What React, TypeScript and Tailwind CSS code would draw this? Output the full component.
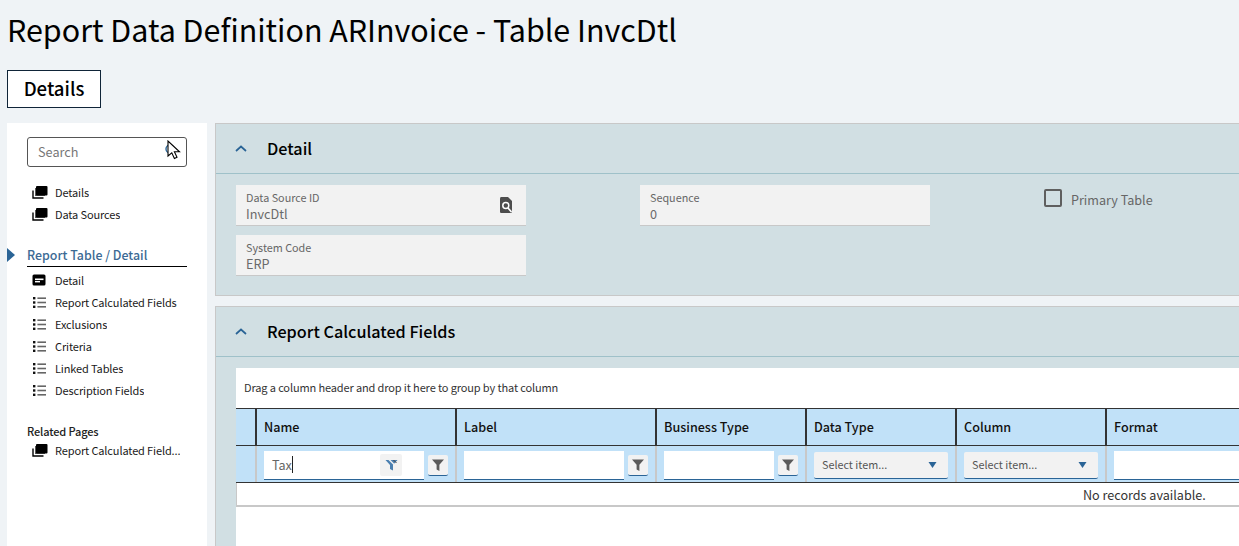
import React from "react";

function StackIcon() {
  return (
    <svg width="16" height="14" viewBox="0 0 16 14" className="shrink-0">
      <path d="M1 5.5V13H11.5" fill="none" stroke="#000" strokeWidth="1.4" />
      <rect x="3" y="3" width="10" height="8" fill="#555" />
      <rect x="4" y="1" width="11.5" height="9.5" rx="1" fill="#000" />
    </svg>
  );
}

function DetailIcon() {
  return (
    <svg width="14" height="12" viewBox="0 0 14 12" className="shrink-0">
      <rect x="0.5" y="0.5" width="13" height="11" rx="1.5" fill="#000" />
      <rect x="3" y="4.5" width="8.5" height="1.6" fill="#fff" />
      <rect x="3" y="7" width="5" height="1.4" fill="#fff" />
    </svg>
  );
}

function ListIcon() {
  return (
    <svg width="13" height="11" viewBox="0 0 13 11" className="shrink-0 ml-px">
      <rect x="0" y="0" width="2.4" height="2.4" fill="#111" />
      <rect x="0" y="4.3" width="2.4" height="2.4" fill="#111" />
      <rect x="0" y="8.6" width="2.4" height="2.4" fill="#111" />
      <rect x="4.4" y="0.4" width="8.6" height="1.6" fill="#666" />
      <rect x="4.4" y="4.7" width="8.6" height="1.6" fill="#666" />
      <rect x="4.4" y="9" width="8.6" height="1.6" fill="#666" />
    </svg>
  );
}

function Funnel() {
  return (
    <svg width="12" height="12" viewBox="0 0 12 12">
      <path d="M0 0.5H12L7.4 5.8V12L4.6 10.4V5.8Z" fill="#5a5a5a" />
    </svg>
  );
}

function FilterBtn() {
  return (
    <button className="w-5 h-[21px] shrink-0 bg-[#f2f2f2] rounded-[2px] border-b border-[#2a6496] flex items-center justify-center">
      <Funnel />
    </button>
  );
}

function Chevron() {
  return (
    <svg width="12" height="7" viewBox="0 0 12 7" className="shrink-0">
      <path d="M1 6L6 1.5L11 6" fill="none" stroke="#2a6496" strokeWidth="1.7" />
    </svg>
  );
}

function NavItem({ icon, label }: { icon: React.ReactNode; label: string }) {
  return (
    <div className="h-[22px] flex items-center text-[11px] tracking-[-0.13px] text-[#1a1a1a]">
      <span className="w-[28px] shrink-0 pl-[5px] flex items-center">{icon}</span>
      <span className="truncate leading-[16px]">{label}</span>
    </div>
  );
}

function Field({ label, value, icon }: { label: string; value: string; icon?: React.ReactNode }) {
  return (
    <div className="relative w-full h-[41px] bg-[#f2f2f2] border-b border-[#c8c8c8] px-[10px] pt-[5px]">
      <div className="text-[10.8px] leading-[15px] text-[#666]">{label}</div>
      <div className="text-[12.7px] leading-[18px] text-[#6a6a6a]">{value}</div>
      {icon}
    </div>
  );
}

function PanelHeader({ title }: { title: string }) {
  return (
    <div className="h-[50px] flex items-center pl-[19px] border-b border-[#9fc1c9]">
      <Chevron />
      <span className="ml-[20px] mb-[2px] text-[16.2px] font-medium leading-[24px] text-black">{title}</span>
    </div>
  );
}

function HeadCell({ w, label }: { w: string; label: string }) {
  return (
    <div className={`${w} shrink-0 border-r-2 border-[#333] pl-[7px] flex items-center text-[12.6px] font-medium text-[#111]`}>
      {label}
    </div>
  );
}

function TextFilter({ w, children }: { w: string; children?: React.ReactNode }) {
  return (
    <div className={`${w} shrink-0 border-r-2 border-[#c8c8c8] pl-[7px] pt-[2px] flex items-center gap-[4px]`}>
      <div className="relative w-[160px] h-[29px] shrink-0 bg-white border-b border-[#2a6496] flex items-center pl-2">
        {children}
      </div>
      <FilterBtn />
    </div>
  );
}

function SelectFilter({ w }: { w: string }) {
  return (
    <div className={`${w} shrink-0 border-r-2 border-[#c8c8c8] pl-[7px] pt-[2px] flex items-center`}>
      <div className="w-[134px] h-[27px] bg-[#f2f2f2] rounded-[2px] border-b border-[#2a6496] flex items-center justify-between pl-2 pr-[11px] text-[10.8px] text-[#555]">
        <span>Select item...</span>
        <svg width="9" height="6" viewBox="0 0 9 6">
          <path d="M0.5 0H8.5L4.5 6Z" fill="#2a6496" />
        </svg>
      </div>
    </div>
  );
}

export default function App() {
  return (
    <div
      className="w-[1239px] h-[546px] overflow-hidden bg-[#eff3f6] text-black"
      style={{ fontFamily: '"Noto Sans CJK SC", "Noto Sans", sans-serif' }}
    >
      <h1 className="h-[70px] pl-[7px] pt-[7px] text-[30.45px] leading-[44px] font-normal whitespace-nowrap">
        Report Data Definition ARInvoice - Table InvcDtl
      </h1>
      <div className="pl-[7px]">
        <div className="w-[94px] h-[38px] bg-white border border-[#0f2438] flex items-center justify-center text-[18.6px] font-medium leading-[24px] pb-[2px]">
          Details
        </div>
      </div>
      <div className="flex mt-[15px] pl-[7px] h-[423px]">
        <aside className="w-[200px] shrink-0 bg-white pl-5 pr-5 pt-[14px] h-full">
          <div className="relative h-[30px] rounded-[3px] border border-[#555] flex items-center pl-[10px] text-[12.7px] text-[#777]">
            Search
            <svg width="20" height="22" viewBox="0 0 20 22" className="absolute left-[136px] top-[2px]">
              <circle cx="6" cy="9" r="4" fill="none" stroke="#2a6496" strokeWidth="1.4" />
              <path d="M4 1V16L7.8 12.8L10.4 18.5L13 17.3L10.4 11.8H15.5Z" fill="#fff" stroke="#000" strokeWidth="1.1" />
            </svg>
          </div>
          <div className="mt-[14px]">
            <NavItem icon={<StackIcon />} label="Details" />
            <NavItem icon={<StackIcon />} label="Data Sources" />
          </div>
          <div className="relative mt-[18px] h-[24px] border-b border-black flex items-center text-[12.4px] font-medium text-[#3c6a94] leading-[20px]">
            <svg width="8" height="14" viewBox="0 0 8 14" className="absolute left-[-20px] top-[5px]">
              <path d="M0 0L8 7L0 14Z" fill="#2a6496" />
            </svg>
            Report Table / Detail
          </div>
          <div className="mt-[2px]">
            <NavItem icon={<DetailIcon />} label="Detail" />
            <NavItem icon={<ListIcon />} label="Report Calculated Fields" />
            <NavItem icon={<ListIcon />} label="Exclusions" />
            <NavItem icon={<ListIcon />} label="Criteria" />
            <NavItem icon={<ListIcon />} label="Linked Tables" />
            <NavItem icon={<ListIcon />} label="Description Fields" />
          </div>
          <div className="mt-[22px] text-[11px] tracking-[-0.13px] font-medium leading-[16px] text-[#222]">Related Pages</div>
          <NavItem icon={<StackIcon />} label="Report Calculated Field..." />
        </aside>

        <main className="ml-2 flex-1 min-w-0 overflow-hidden">
          <section className="h-[173px] bg-[#d1dfe3] border-t border-l border-b border-[#c8c8c8]">
            <PanelHeader title="Detail" />
            <div className="flex pl-5 pt-[11px]">
              <div className="w-[290px] flex flex-col gap-[9px] shrink-0">
                <Field
                  label="Data Source ID"
                  value="InvcDtl"
                  icon={
                    <svg width="14" height="17" viewBox="0 0 14 17" className="absolute right-[13px] top-[12px]">
                      <path d="M2 0H9L13 4V14.5Q13 16 11.5 16H2Q1 16 1 14.5V1.5Q1 0 2 0Z" fill="#4d4d4d" />
                      <circle cx="6.8" cy="8.5" r="3" fill="none" stroke="#fff" strokeWidth="1.5" />
                      <path d="M9 11L12.5 15" stroke="#fff" strokeWidth="1.6" />
                    </svg>
                  }
                />
                <Field label="System Code" value="ERP" />
              </div>
              <div className="w-[290px] ml-[114px] shrink-0">
                <Field label="Sequence" value="0" />
              </div>
              <label className="ml-[114px] flex items-start pt-[5px] text-[12.6px] leading-[20px] text-[#666]">
                <span className="w-[18px] h-[18px] border-2 border-[#5f5f5f] rounded-[2px] mr-[9px] mt-[-1px]" />
                <span>Primary Table</span>
              </label>
            </div>
          </section>

          <section className="mt-[10px] h-[240px] bg-[#d1dfe3] border-t border-l border-[#c8c8c8]">
            <PanelHeader title="Report Calculated Fields" />
            <div className="ml-5 mt-[11px] bg-white h-[178px]">
              <div className="h-[40px] pl-2 pb-[2px] flex items-center text-[11px] tracking-[-0.13px] text-[#333]">
                Drag a column header and drop it here to group by that column
              </div>
              <div className="flex h-[38px] bg-[#c1e1f8] border-t border-b border-[#333]">
                <div className="w-[21px] shrink-0 border-r-2 border-[#333]" />
                <HeadCell w="w-[200px]" label="Name" />
                <HeadCell w="w-[200px]" label="Label" />
                <HeadCell w="w-[150px]" label="Business Type" />
                <HeadCell w="w-[150px]" label="Data Type" />
                <HeadCell w="w-[150px]" label="Column" />
                <div className="flex-1 pl-[7px] flex items-center text-[12.6px] font-medium text-[#111]">Format</div>
              </div>
              <div className="flex h-[37px] bg-[#c1e1f8] border-b border-[#333]">
                <div className="w-[21px] shrink-0 border-r-2 border-[#c8c8c8]" />
                <TextFilter w="w-[200px]">
                  <span className="text-[12.6px] text-[#666] leading-[18px]">Tax</span>
                  <span className="w-px h-[17px] bg-[#222]" />
                  <span className="absolute right-[22px] top-[3px] w-[22px] h-[22px] bg-[#f2f2f2] rounded-[2px] flex items-center justify-center">
                    <svg width="13" height="12" viewBox="0 0 13 12">
                      <path d="M0.5 1H12.5L8 6V11.5L5 10V6Z" fill="#4a7fb0" />
                      <path d="M2.5 -1L11.5 8" stroke="#f2f2f2" strokeWidth="1.4" />
                      <path d="M8.5 1L11.5 4" stroke="#444" strokeWidth="1" />
                    </svg>
                  </span>
                </TextFilter>
                <TextFilter w="w-[200px]" />
                <div className="w-[150px] shrink-0 border-r-2 border-[#c8c8c8] pl-[7px] pt-[2px] flex items-center gap-[4px]">
                  <div className="w-[110px] h-[29px] shrink-0 bg-white border-b border-[#2a6496]" />
                  <FilterBtn />
                </div>
                <SelectFilter w="w-[150px]" />
                <SelectFilter w="w-[150px]" />
                <div className="flex-1 pl-[7px] pt-[2px] flex items-center">
                  <div className="w-full h-[29px] bg-white border-b border-[#2a6496]" />
                </div>
              </div>
              <div className="h-[24px] border-b-2 border-l border-[#c8c8c8] flex items-center pl-[846px] pt-[2px] text-[12.6px] text-[#333] whitespace-nowrap">
                No records available.
              </div>
            </div>
          </section>
        </main>
      </div>
    </div>
  );
}
